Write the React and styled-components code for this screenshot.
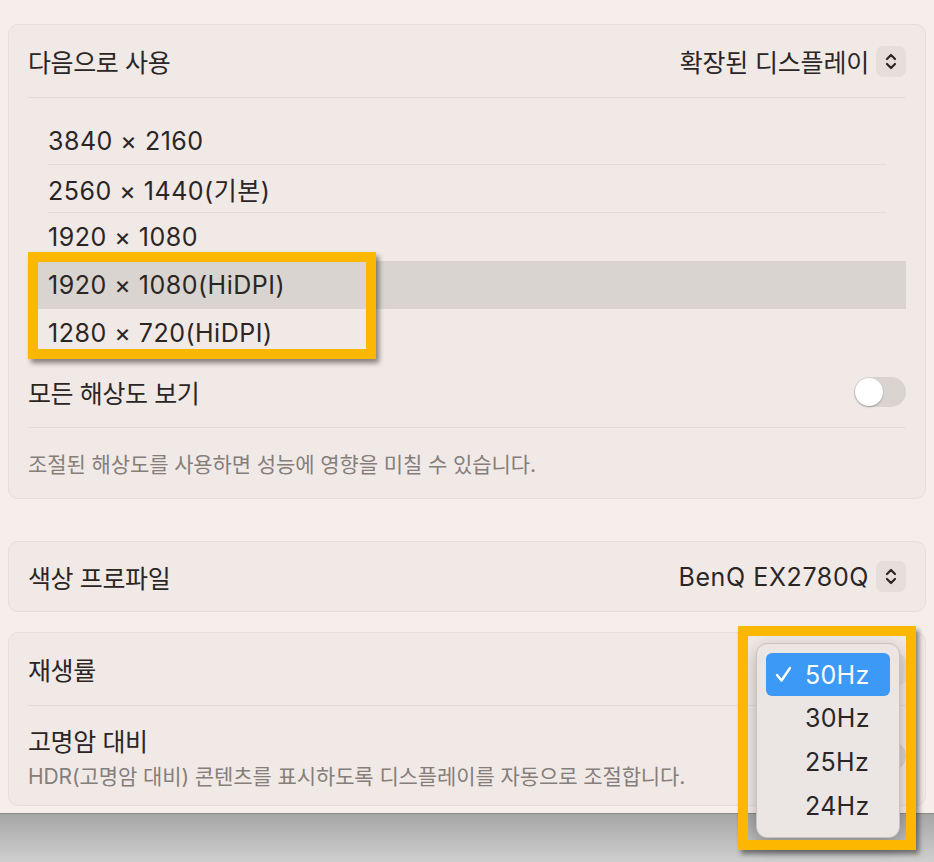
import React from "react";
import styled, { createGlobalStyle } from "styled-components";

const GlobalStyle = createGlobalStyle`
	body {
		margin: 0;
		background: #f5eeeb;
		font-family: Inter, "Noto Sans CJK KR", sans-serif;
		color: #2a2625;
	}
`;

const Screen = styled.div`
	position: relative;
	width: 934px;
	height: 862px;
	overflow: hidden;
	display: flex;
	flex-direction: column;
`;

const Window = styled.div`
	display: flex;
	flex-direction: column;
	padding: 24px 8px 7px;
	background: #f5eeeb;
`;

const Card = styled.div`
	background: #f1e9e6;
	border: 1px solid #e6dedb;
	border-radius: 10px;
	padding: 0 19px;
	margin-top: ${(p) => p.$gap || 0}px;
`;

const Row = styled.div`
	display: flex;
	align-items: center;
	justify-content: space-between;
	height: ${(p) => p.$h}px;
	border-bottom: ${(p) => (p.$divider ? "1px solid #e4dcd9" : "none")};
	box-sizing: border-box;
`;

const Label = styled.span`
	font-size: 25px;
	letter-spacing: -0.4px;
`;

const Note = styled.span`
	font-size: 21px;
	color: #857e7b;
	letter-spacing: -0.1px;
`;

const Stack = styled.div`
	display: flex;
	flex-direction: column;
	gap: 2px;
`;

const PopupWrap = styled.div`
	display: flex;
	align-items: center;
	gap: 7px;
`;

const PopupValue = styled.span`
	font-size: 25px;
	letter-spacing: ${(p) => (p.$latin ? "0.6px" : "-0.2px")};
`;

const Stepper = styled.div`
	width: 30px;
	height: 31px;
	border-radius: 7px;
	background: #e5dedb;
	display: flex;
	align-items: center;
	justify-content: center;
`;

const ResList = styled.div`
	display: flex;
	flex-direction: column;
	padding-top: 19px;
`;

const ResItem = styled.div`
	background: ${(p) => (p.$selected ? "#d9d4d0" : "transparent")};
	padding: 0 20px;
`;

const ResInner = styled.div`
	height: 48px;
	display: flex;
	align-items: center;
	box-sizing: border-box;
	font-size: 25px;
	letter-spacing: 0.5px;
	border-bottom: ${(p) => (p.$divider ? "1px solid #e4dcd9" : "none")};
`;

const Toggle = styled.div`
	width: 52px;
	height: 30px;
	border-radius: 15px;
	background: #dad4d1;
	display: flex;
	align-items: center;
	padding: 1px;
	box-sizing: border-box;
`;

const Knob = styled.div`
	width: 28px;
	height: 28px;
	border-radius: 50%;
	background: #fff;
	box-shadow: 0 1px 2px rgba(0, 0, 0, 0.3);
`;

const Desktop = styled.div`
	flex: 1;
	border-top: 1px solid #8a8a8a;
	background: linear-gradient(#a6a6a6, #cfcfcf);
`;

const Highlight = styled.div`
	position: absolute;
	left: ${(p) => p.$x}px;
	top: ${(p) => p.$y}px;
	width: ${(p) => p.$w}px;
	height: ${(p) => p.$h}px;
	box-sizing: border-box;
	border: 10px solid #fcb800;
	box-shadow: 3px 4px 5px rgba(0, 0, 0, 0.45);
	z-index: 3;
`;

const Menu = styled.div`
	position: absolute;
	left: 756px;
	top: 643px;
	width: 144px;
	height: 195px;
	box-sizing: border-box;
	padding: 9px 9px;
	border-radius: 11px;
	background: #ebe6e3;
	border: 1px solid #c9c3c0;
	box-shadow: 0 6px 18px rgba(0, 0, 0, 0.28);
	display: flex;
	flex-direction: column;
	z-index: 2;
`;

const MenuItem = styled.div`
	height: ${(p) => (p.$active ? 43 : 44)}px;
	border-radius: 6px;
	display: flex;
	align-items: center;
	padding-left: 9px;
	gap: 13px;
	font-size: 25px;
	letter-spacing: 0.3px;
	background: ${(p) => (p.$active ? "#3d99f6" : "transparent")};
	color: ${(p) => (p.$active ? "#fff" : "#2a2625")};
`;

const CheckSlot = styled.span`
	width: 17px;
	display: flex;
`;

function Chevrons() {
	return (
		<svg width="12" height="19" viewBox="0 0 12 19" fill="none">
			<path d="M2 7 L6 3 L10 7" stroke="#2a2625" strokeWidth="2.2" strokeLinecap="round" strokeLinejoin="round" />
			<path d="M2 12 L6 16 L10 12" stroke="#2a2625" strokeWidth="2.2" strokeLinecap="round" strokeLinejoin="round" />
		</svg>
	);
}

function Check() {
	return (
		<svg width="17" height="17" viewBox="0 0 17 17" fill="none">
			<path d="M2 9 L6.5 14.5 L15 2" stroke="#fff" strokeWidth="2.4" strokeLinecap="round" strokeLinejoin="round" />
		</svg>
	);
}

const resolutions = [
	"3840 × 2160",
	"2560 × 1440(기본)",
	"1920 × 1080",
	"1920 × 1080(HiDPI)",
	"1280 × 720(HiDPI)",
];

const rates = ["50Hz", "30Hz", "25Hz", "24Hz"];

export default function App() {
	return (
		<>
			<GlobalStyle />
			<Screen>
				<Window>
					<Card>
						<Row $h={73} $divider>
							<Label>다음으로 사용</Label>
							<PopupWrap>
								<PopupValue>확장된 디스플레이</PopupValue>
								<Stepper>
									<Chevrons />
								</Stepper>
							</PopupWrap>
						</Row>
						<ResList>
							{resolutions.map((r, i) => (
								<ResItem key={r} $selected={i === 3}>
									<ResInner $divider={i < 2}>{r}</ResInner>
								</ResItem>
							))}
						</ResList>
						<Row $h={71} $divider>
							<Label>모든 해상도 보기</Label>
							<Toggle>
								<Knob />
							</Toggle>
						</Row>
						<Row $h={70}>
							<Note>조절된 해상도를 사용하면 성능에 영향을 미칠 수 있습니다.</Note>
						</Row>
					</Card>
					<Card $gap={42}>
						<Row $h={69}>
							<Label>색상 프로파일</Label>
							<PopupWrap>
								<PopupValue $latin>BenQ EX2780Q</PopupValue>
								<Stepper>
									<Chevrons />
								</Stepper>
							</PopupWrap>
						</Row>
					</Card>
					<Card $gap={20}>
						<Row $h={73} $divider>
							<Label>재생률</Label>
							<Stepper />
						</Row>
						<Row $h={99}>
							<Stack>
								<Label>고명암 대비</Label>
								<Note>HDR(고명암 대비) 콘텐츠를 표시하도록 디스플레이를 자동으로 조절합니다.</Note>
							</Stack>
							<Toggle>
								<Knob />
							</Toggle>
						</Row>
					</Card>
				</Window>
				<Desktop />
				<Menu>
					{rates.map((r, i) => (
						<MenuItem key={r} $active={i === 0}>
							<CheckSlot>{i === 0 && <Check />}</CheckSlot>
							{r}
						</MenuItem>
					))}
				</Menu>
				<Highlight $x={28} $y={252} $w={348} $h={107} />
				<Highlight $x={738} $y={626} $w={178} $h={224} />
			</Screen>
		</>
	);
}
